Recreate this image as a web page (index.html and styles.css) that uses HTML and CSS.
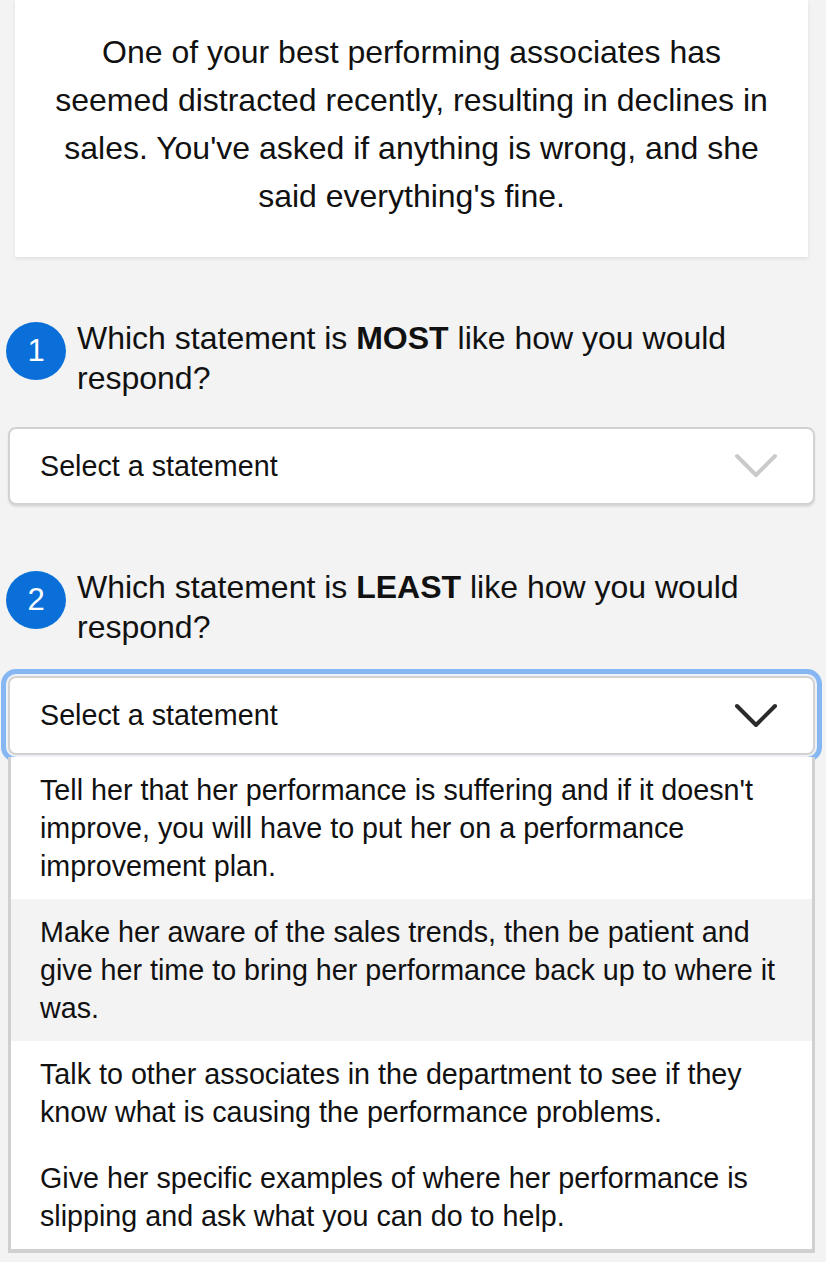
FILE: index.html
```html
<!DOCTYPE html>
<html lang="en">
<head>
  <meta charset="UTF-8">
  <meta name="viewport" content="width=device-width, initial-scale=1.0">
  <title>Situational Judgement</title>
  <link rel="stylesheet" href="styles.css">
</head>
<body>
  <div class="page">
    <div class="scenario">
      <p>One of your best performing associates has seemed distracted recently, resulting in declines in sales. You've asked if anything is wrong, and she said everything's fine.</p>
    </div>

    <div class="question">
      <span class="badge">1</span>
      <p>Which statement is <b>MOST</b> like how you would respond?</p>
    </div>
    <div class="select">
      <span>Select a statement</span>
      <svg class="chevron" width="44" height="28" viewBox="0 0 44 28"><polyline points="3,4 22,23 41,4" fill="none" stroke="#cacaca" stroke-width="4" stroke-linecap="round" stroke-linejoin="round"/></svg>
    </div>

    <div class="question">
      <span class="badge">2</span>
      <p>Which statement is <b>LEAST</b> like how you would respond?</p>
    </div>
    <div class="select open">
      <span>Select a statement</span>
      <svg class="chevron" width="44" height="28" viewBox="0 0 44 28"><polyline points="3,4 22,23 41,4" fill="none" stroke="#2b2b2b" stroke-width="4" stroke-linecap="round" stroke-linejoin="round"/></svg>
    </div>
    <ul class="options">
      <li>Tell her that her performance is suffering and if it doesn't improve, you will have to put her on a performance improvement plan.</li>
      <li class="hover">Make her aware of the sales trends, then be patient and give her time to bring her performance back up to where it was.</li>
      <li>Talk to other associates in the department to see if they know what is causing the performance problems.</li>
      <li>Give her specific examples of where her performance is slipping and ask what you can do to help.</li>
    </ul>
  </div>
</body>
</html>
```

FILE: styles.css
```css
body { margin: 0; background: #f3f3f3; font-family: "Liberation Sans", Arial, sans-serif; color: #111; }
.page { padding: 0 11px 10px 8px; }
.scenario { background: #fff; margin: 0 7px 0 7px; padding: 28px 35px 37px; text-align: center; box-shadow: 0 2px 4px rgba(0,0,0,0.08); }
.scenario p { margin: 0; font-size: 32px; line-height: 48px; }

.question { display: flex; align-items: flex-start; gap: 11px; margin: 61px 0 29px -2px; padding-right: 30px; }
.question + .select { margin-bottom: 62px; }
.question p { margin: 0; font-size: 32px; line-height: 40px; }
.question b { font-weight: bold; }
.badge { flex: none; width: 60px; height: 58px; margin-top: 4px; border-radius: 50%; background: #0b6fd9; color: #fff; font-size: 31px; display: flex; align-items: center; justify-content: center; }

.select { height: 74px; display: flex; align-items: center; justify-content: space-between; background: #fff; border: 2px solid #d2d2d2; border-radius: 8px; padding: 0 35px 0 30px; font-size: 28.7px; box-shadow: 0 2px 2px rgba(0,0,0,0.1); }
.select.open { height: 75px; margin-bottom: 2px; box-shadow: 0 0 0 2px #eef1f5, 0 0 0 7px #86b7f3; }
.chevron { display: block; }

.options { position: relative; z-index: 1; list-style: none; margin: 0; padding: 0; background: #fff; border: 3px solid #d0d0d0; border-top: 0; border-bottom-width: 4px; }
.options li { font-size: 28.7px; line-height: 38px; padding: 14px 25px 14px 29px; }
.options li.hover { background: #f3f3f3; }
```
